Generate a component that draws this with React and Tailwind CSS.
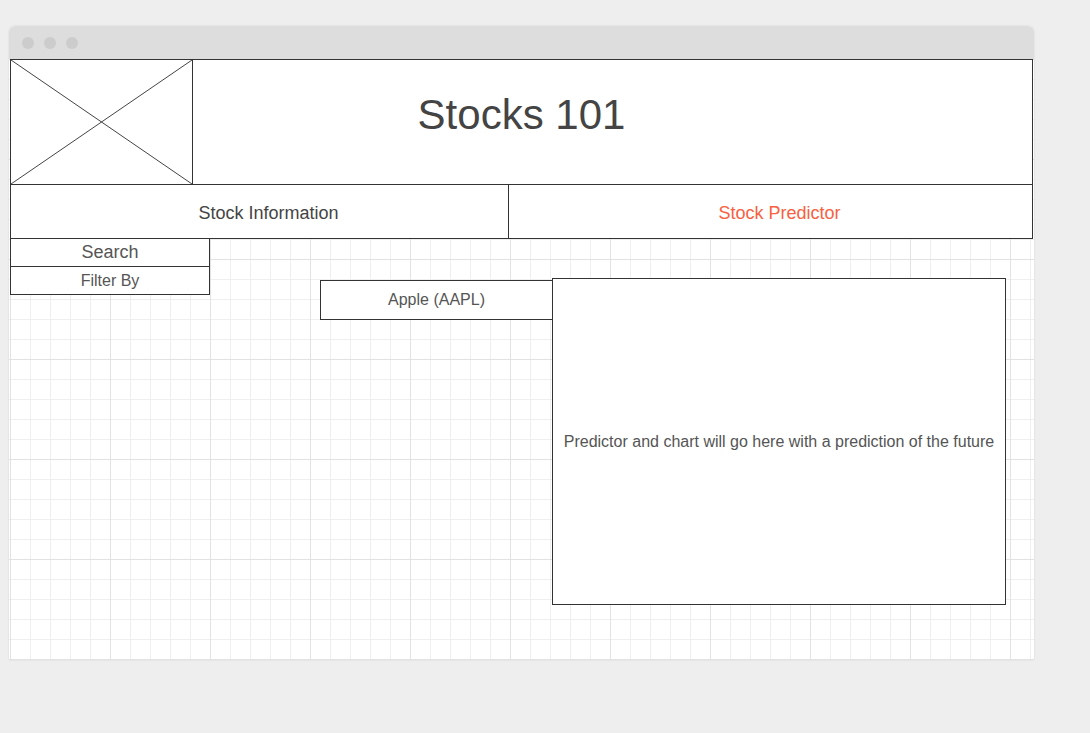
import React from 'react';

const font = "font-['Liberation_Sans',Arial,sans-serif]";

// Placeholder image: box with a cross
const LogoPlaceholder = () => (
  <div className="w-[182px] h-full border-r border-[#333] shrink-0">
    <svg className="w-full h-full block" viewBox="0 0 181 124" preserveAspectRatio="none">
      <line x1="0" y1="0" x2="181" y2="124" stroke="#444" strokeWidth="1" />
      <line x1="181" y1="0" x2="0" y2="124" stroke="#444" strokeWidth="1" />
    </svg>
  </div>
);

export default function App() {
  return (
    <div className={`min-h-[733px] w-full bg-[#eeeeee] pt-[26px] pl-[9px] ${font}`}>
      {/* Browser window */}
      <div className="w-[1025px] rounded-t-[6px] bg-white shadow-[0_0_2px_rgba(0,0,0,0.12)]">
        {/* Title bar */}
        <div className="h-[33px] bg-[#dddddd] rounded-t-[6px] flex items-center gap-[10px] pl-[13px]">
          <div className="w-[12px] h-[12px] rounded-full bg-[#cccccc]"></div>
          <div className="w-[12px] h-[12px] rounded-full bg-[#cccccc]"></div>
          <div className="w-[12px] h-[12px] rounded-full bg-[#cccccc]"></div>
        </div>

        {/* Canvas with grid */}
        <div className="h-[601px] px-[1px] bg-white bg-[linear-gradient(#e2e2e2_1px,transparent_1px),linear-gradient(90deg,#e2e2e2_1px,transparent_1px),linear-gradient(#efefef_1px,transparent_1px),linear-gradient(90deg,#efefef_1px,transparent_1px)] bg-[size:100px_100px,100px_100px,20px_20px,20px_20px] bg-[position:1px_0,1px_0,1px_0,1px_0]">
          {/* Header */}
          <div className="h-[126px] w-[1023px] border border-[#333] bg-white flex items-stretch">
            <LogoPlaceholder />
            <div className="flex-1 -ml-[182px] flex items-center justify-center pb-[14px]">
              <h1 className="text-[42px] leading-none text-[#444]">Stocks 101</h1>
            </div>
          </div>

          {/* Nav tabs */}
          <div className="h-[54px] w-[1023px] border-x border-b border-[#333] bg-white flex">
            <div className="w-[498px] border-r border-[#333] flex items-center justify-center pl-[18px] pt-[3px] text-[18px] text-[#444]">
              Stock Information
            </div>
            <div className="flex-1 flex items-center justify-center pl-[18px] pt-[3px] text-[18px] text-[#f9603f]">
              Stock Predictor
            </div>
          </div>

          {/* Main content */}
          <div className="flex items-start">
            <div className="w-[200px] shrink-0">
              <div className="h-[28px] border-x border-b border-[#333] bg-white flex items-center justify-center text-[18px] text-[#555]">
                Search
              </div>
              <div className="h-[28px] border-x border-b border-[#333] bg-white flex items-center justify-center text-[16px] text-[#555]">
                Filter By
              </div>
            </div>

            <div className="ml-[110px] mt-[41px] w-[232px] h-[40px] border border-r-0 border-[#333] bg-white flex items-center justify-center text-[16px] text-[#555]">
              Apple (AAPL)
            </div>

            <div className="mt-[39px] w-[454px] h-[327px] border border-[#333] bg-white flex items-center justify-center text-[16px] text-[#555]">
              Predictor and chart will go here with a prediction of the future
            </div>
          </div>
        </div>
      </div>
    </div>
  );
}
